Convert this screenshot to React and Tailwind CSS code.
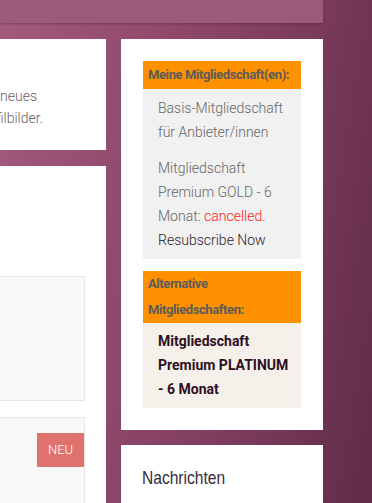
export default function App() {
  return (
    <div
      className="w-[372px] h-[503px] overflow-hidden relative"
      style={{ fontFamily: "Roboto, 'Liberation Sans', sans-serif" }}
    >
      <div className="absolute inset-0 bg-[linear-gradient(100deg,#a35a7f_0%,#92496e_35%,#7a3a5c_70%,#602c47_100%)]" />
      <div className="relative flex flex-col">
        <div className="w-[323px] h-[23px] bg-[#9c5a7b] shadow-[0_1px_2px_rgba(60,20,40,0.35)]" />
        <div className="flex gap-[15px] mt-[16px]">
          {/* left column */}
          <div className="w-[106px] flex flex-col gap-[16px]">
            <div className="h-[111px] bg-white overflow-hidden pt-[46px] text-[14px] leading-[22px] font-light text-[#6e5a6a]">
              <div className="flex justify-end mr-[69px] whitespace-nowrap">Lade ein neues</div>
              <div className="flex justify-end mr-[63px] whitespace-nowrap">Profilbilder.</div>
            </div>
            <div className="h-[400px] bg-white overflow-hidden pt-[110px] pr-[21px]">
              <div className="h-[125px] bg-[#f8f8f8] border border-l-0 border-[#e6e6e6]" />
              <div className="h-[120px] mt-[16px] bg-[#f8f8f8] border border-l-0 border-[#e6e6e6] pt-[15px] flex justify-end">
                <div className="w-[47px] h-[34px] bg-[#e0726d] text-white text-[13px] font-light flex items-center justify-center">
                  NEU
                </div>
              </div>
            </div>
          </div>
          {/* right column */}
          <div className="w-[202px] flex flex-col gap-[15px]">
            <div className="bg-white p-[22px]">
              <div className="h-[28px] bg-[#ff9100] pl-[5px] flex items-center text-[13px] font-bold text-[#5b5b5b] tracking-[-0.4px]">
                Meine Mitgliedschaft(en):
              </div>
              <div className="bg-[#f1f1f1] pl-[15px] pr-[8px] pt-[7px] pb-[7px] text-[14px] leading-[24px] font-light text-[#666]">
                <p>Basis-Mitgliedschaft für Anbieter/innen</p>
                <p className="mt-[12px]">
                  Mitgliedschaft Premium GOLD - 6 Monat: <span className="text-[#ff1a1a]">cancelled.</span>
                </p>
                <p className="text-[#2a1a24]">Resubscribe Now</p>
              </div>
              <div className="mt-[12px] bg-[#ff9100] pl-[5px] pr-[40px] text-[13px] leading-[26px] font-bold text-[#5b5b5b] tracking-[-0.4px]">
                Alternative Mitgliedschaften:
              </div>
              <div className="bg-[#f5f0e9] pl-[15px] pr-[6px] pt-[6px] pb-[7px] text-[14px] leading-[24px] font-bold text-[#2d0f22]">
                Mitgliedschaft Premium PLATINUM - 6 Monat
              </div>
            </div>
            <div className="h-[100px] bg-white pl-[21px] pt-[21px]">
              <div
                className="text-[19px] leading-[24px] text-[#3a2a40] scale-x-[0.82] origin-left whitespace-nowrap"
                style={{ fontFamily: "'Liberation Sans', Arial, sans-serif" }}
              >
                Nachrichten
              </div>
            </div>
          </div>
        </div>
      </div>
    </div>
  );
}
